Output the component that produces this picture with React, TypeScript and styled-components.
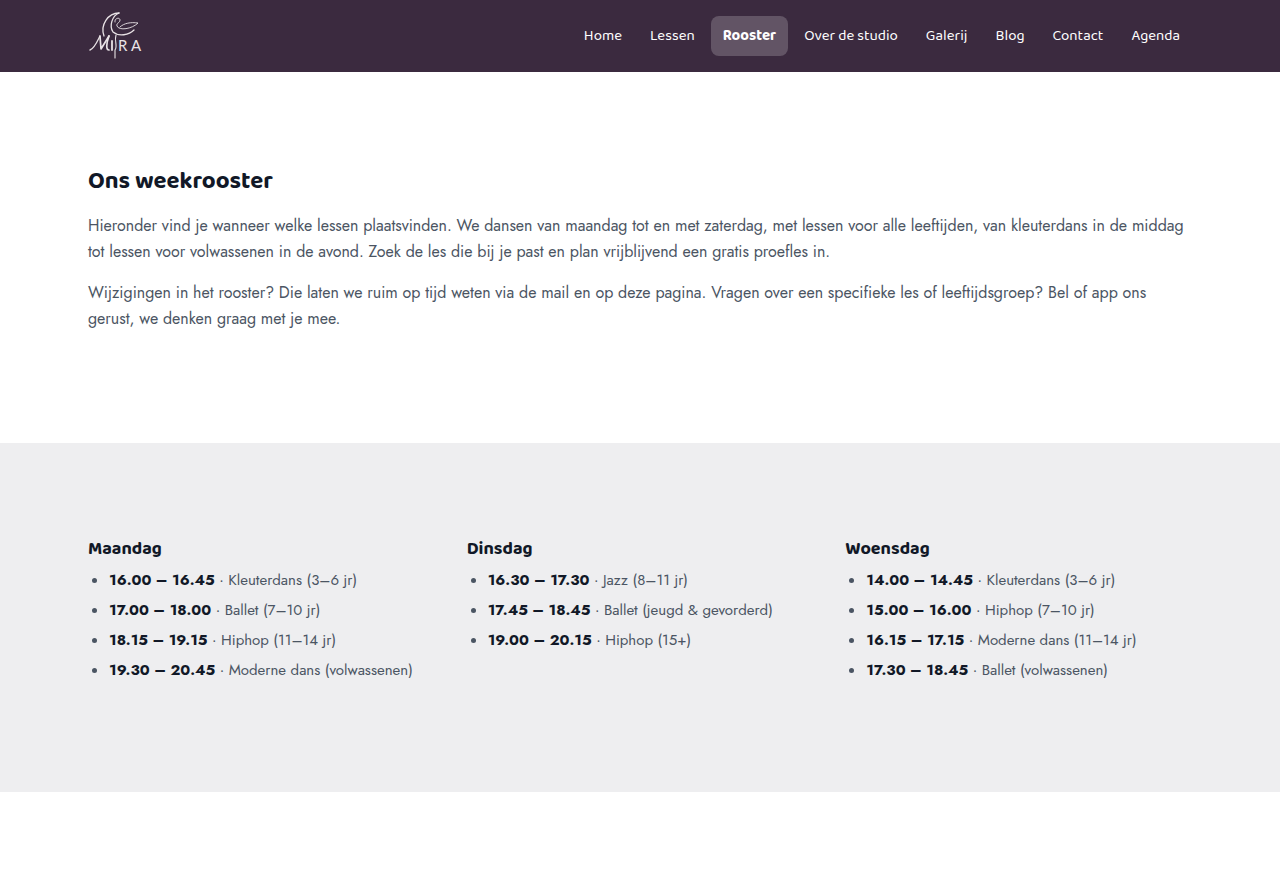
import React from "react";
import styled, { createGlobalStyle } from "styled-components";

const display = `"Baloo 2", "Noto Sans", sans-serif`;
const body = `Jost, Lato, sans-serif`;

const GlobalStyle = createGlobalStyle`
  *, *::before, *::after { box-sizing: border-box; }
  body { margin: 0; background: #fff; color: #4b5563; font: 16px/26px ${body}; }
`;

const Header = styled.header`
  background: #3b2a3f;
`;

const Container = styled.div`
  max-width: 1152px;
  margin: 0 auto;
  padding: 0 24px;
`;

const Bar = styled(Container)`
  display: flex;
  align-items: center;
  justify-content: space-between;
  min-height: 72px;
`;

const LogoLink = styled.a`
  display: block;
  height: 48px;
  color: #e9e3e6;
`;

const NavList = styled.ul`
  display: flex;
  gap: 4px;
  margin: 0;
  padding: 0;
  list-style: none;
`;

const NavLink = styled.a<{ $active?: boolean }>`
  display: block;
  padding: 8px 12px;
  border-radius: 8px;
  font: ${(p) => (p.$active ? 700 : 400)} 15px/24px ${display};
  color: #fff;
  text-decoration: none;
  white-space: nowrap;
  background: ${(p) => (p.$active ? "rgba(255, 255, 255, 0.2)" : "transparent")};
`;

const Section = styled.section<{ $tinted?: boolean }>`
  padding: 96px 0;
  background: ${(p) => (p.$tinted ? "#eeeef0" : "#fff")};
`;

const Title = styled.h2`
  margin: 0 0 18px;
  font: 700 24px/27px ${display};
  color: #111827;
`;

const Paragraph = styled.p`
  margin: 0 0 15px;
`;

const Days = styled.div`
  display: grid;
  grid-template-columns: repeat(3, 1fr);
  gap: 32px;
`;

const DayTitle = styled.h3`
  margin: 0 0 8px;
  font: 700 18px/20px ${display};
  color: #111827;
`;

const Lessons = styled.ul`
  display: grid;
  gap: 4px;
  margin: 0 0 13px;
  padding-left: 21px;
  font-size: 15px;
`;

const Time = styled.strong`
  font-weight: 700;
  color: #111827;
`;

const links = ["Home", "Lessen", "Rooster", "Over de studio", "Galerij", "Blog", "Contact", "Agenda"];

const days = [
  {
    name: "Maandag",
    lessons: [
      ["16.00 – 16.45", "Kleuterdans (3–6 jr)"],
      ["17.00 – 18.00", "Ballet (7–10 jr)"],
      ["18.15 – 19.15", "Hiphop (11–14 jr)"],
      ["19.30 – 20.45", "Moderne dans (volwassenen)"],
    ],
  },
  {
    name: "Dinsdag",
    lessons: [
      ["16.30 – 17.30", "Jazz (8–11 jr)"],
      ["17.45 – 18.45", "Ballet (jeugd & gevorderd)"],
      ["19.00 – 20.15", "Hiphop (15+)"],
    ],
  },
  {
    name: "Woensdag",
    lessons: [
      ["14.00 – 14.45", "Kleuterdans (3–6 jr)"],
      ["15.00 – 16.00", "Hiphop (7–10 jr)"],
      ["16.15 – 17.15", "Moderne dans (11–14 jr)"],
      ["17.30 – 18.45", "Ballet (volwassenen)"],
    ],
  },
];

function Logo() {
  return (
    <svg width="56" height="48" viewBox="0 0 56 48" fill="none" stroke="currentColor" strokeLinecap="round" strokeLinejoin="round" role="img" aria-label="Mira">
      <path d="M31 1C20 1 12 13 16 24" strokeWidth="1.3" />
      <path d="M31 1C24 4 21 14 25 20C31 25 41 23 46 18" strokeWidth="1.3" />
      <path d="M27 10C26 6 32 5 32 8C32 11 28 11 29 14C31 19 44 17 50 11C43 10 36 11 32 15" strokeWidth=".9" />
      <path d="M2 38C6 37 9 30 12 24" strokeWidth="1.3" />
      <path d="M12 24L13 37L21 24" strokeWidth="1.7" />
      <path d="M21 24C18 32 18 38 21 38" strokeWidth="1.7" />
      <path d="M24 29V38" strokeWidth="1.8" />
      <path d="M28 23C26 29 30 34 27 38L27 46" strokeWidth="1.1" />
      <text x="30" y="39" fontFamily="Lato, sans-serif" fontSize="15" fill="currentColor" stroke="none">R</text>
      <text x="43" y="39" fontFamily="Lato, sans-serif" fontSize="15" fill="currentColor" stroke="none">A</text>
    </svg>
  );
}

export default function App() {
  return (
    <>
      <GlobalStyle />
      <Header>
        <Bar>
          <LogoLink href="#home"><Logo /></LogoLink>
          <nav aria-label="Hoofdmenu">
            <NavList>
              {links.map((label) => (
                <li key={label}>
                  <NavLink href="#" $active={label === "Rooster"}>{label}</NavLink>
                </li>
              ))}
            </NavList>
          </nav>
        </Bar>
      </Header>
      <main>
        <Section>
          <Container>
            <Title>Ons weekrooster</Title>
            <Paragraph>
              Hieronder vind je wanneer welke lessen plaatsvinden. We dansen van maandag tot en met zaterdag, met lessen voor alle leeftijden, van kleuterdans in de middag tot lessen voor volwassenen in de avond. Zoek de les die bij je past en plan vrijblijvend een gratis proefles in.
            </Paragraph>
            <Paragraph>
              Wijzigingen in het rooster? Die laten we ruim op tijd weten via de mail en op deze pagina. Vragen over een specifieke les of leeftijdsgroep? Bel of app ons gerust, we denken graag met je mee.
            </Paragraph>
          </Container>
        </Section>
        <Section $tinted>
          <Container>
            <Days>
              {days.map((day) => (
                <div key={day.name}>
                  <DayTitle>{day.name}</DayTitle>
                  <Lessons>
                    {day.lessons.map(([time, lesson]) => (
                      <li key={time}><Time>{time}</Time> · {lesson}</li>
                    ))}
                  </Lessons>
                </div>
              ))}
            </Days>
          </Container>
        </Section>
      </main>
    </>
  );
}
